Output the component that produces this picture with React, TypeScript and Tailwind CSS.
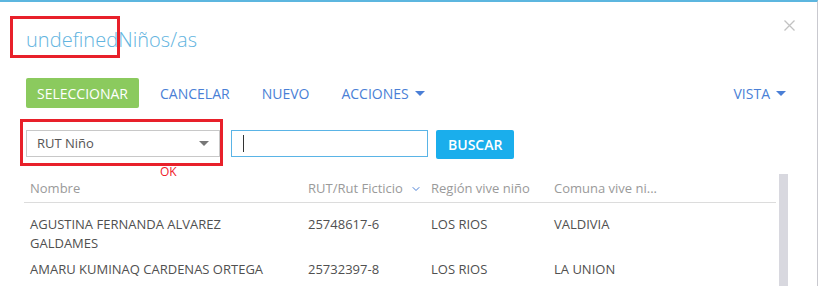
import { ChevronDown } from "lucide-react";

const rows = [
  { nombre: ["AGUSTINA FERNANDA ALVAREZ", "GALDAMES"], rut: "25748617-6", region: "LOS RIOS", comuna: "VALDIVIA" },
  { nombre: ["AMARU KUMINAQ CARDENAS ORTEGA"], rut: "25732397-8", region: "LOS RIOS", comuna: "LA UNION" },
];

function Caret() {
  return <span className="ml-[6px] inline-block h-0 w-0 border-x-[5px] border-t-[5px] border-x-transparent border-t-[#4a7fd6]" />;
}

export default function App() {
  return (
    <div
      className="relative h-[286px] w-[818px] overflow-hidden border-t-[2px] border-r border-t-[#5cb6df] border-r-[#c9c9cf] bg-white"
      style={{ fontFamily: '"Open Sans", "Liberation Sans", sans-serif' }}
    >
      {/* title */}
      <div className="relative pl-[26px] pt-[24px]">
        <h1 className="text-[20px] font-light tracking-[0.05px] leading-[28px] text-[#62b4e0]">undefinedNiños/as</h1>
        <div className="absolute left-[10px] top-[14px] h-[42px] w-[110px] border-[3px] border-[#e8202a]" />
      </div>
      <button className="absolute left-[784px] top-[18px]">
        <svg width="11" height="11" viewBox="0 0 11 11" stroke="#c2c2c2" strokeWidth="1.3">
          <path d="M0.5 0.5L10.5 10.5M10.5 0.5L0.5 10.5" />
        </svg>
      </button>

      {/* toolbar */}
      <div className="mt-[24px] flex h-[30px] items-center pl-[26px] pr-[31px] text-[14px] text-[#4a7fd6]">
        <button className="h-[30px] rounded-[2px] bg-[#8bca5e] px-[11px] text-white">SELECCIONAR</button>
        <span className="ml-[21px]">CANCELAR</span>
        <span className="ml-[32px]">NUEVO</span>
        <span className="ml-[32px] flex items-center">ACCIONES<Caret /></span>
        <span className="ml-auto flex items-center">VISTA<Caret /></span>
      </div>

      {/* search */}
      <div className="mt-[22px] flex items-start pl-[26px]">
        <div className="relative">
          <div className="flex h-[27px] w-[194px] items-center justify-between border border-[#c8c8c8] pl-[10px] pr-[10px] text-[13px] text-[#555]">
            <span>RUT Niño</span>
            <span className="h-0 w-0 border-x-[5px] border-t-[5px] border-x-transparent border-t-[#777]" />
          </div>
          <div className="absolute -left-[6px] -top-[11px] h-[47px] w-[203px] border-[3px] border-[#e8202a]" />
          <div className="absolute left-[134px] top-[35px] text-[12px] leading-[14px] text-[#f0202a]">OK</div>
        </div>
        <div className="ml-[11px] flex h-[27px] w-[197px] items-center border border-[#5ab4e6] pl-[11px]">
          <span className="h-[17px] w-px bg-[#333]" />
        </div>
        <button className="ml-[8px] h-[29px] rounded-[2px] bg-[#1aaeec] px-[12px] text-[14px] font-semibold text-white">BUSCAR</button>
      </div>

      {/* table */}
      <div className="mt-[15px] flex pl-[24px]">
        <div className="w-[752px] text-[13px]">
          <div className="flex h-[29px] items-center border-b border-[#dcdcdc] pt-[1px] text-[#9a9a9a]">
            <div className="w-[278px] pl-[6px]">Nombre</div>
            <div className="flex w-[123px] items-center pl-[6px]">
              RUT/Rut Ficticio
              <ChevronDown className="ml-[7px] h-[12px] w-[12px] text-[#4a7fd6]" strokeWidth={2} />
            </div>
            <div className="w-[123px] pl-[6px]">Región vive niño</div>
            <div className="pl-[6px]">Comuna vive ni...</div>
          </div>
          <div className="pt-[12px] text-[#505050]">
            {rows.map((r) => (
              <div key={r.rut} className="flex pb-[7px] leading-[19px]">
                <div className="w-[278px] pl-[6px]">
                  {r.nombre.map((n) => (
                    <div key={n}>{n}</div>
                  ))}
                </div>
                <div className="w-[123px] pl-[6px]">{r.rut}</div>
                <div className="w-[123px] pl-[6px]">{r.region}</div>
                <div className="pl-[6px]">{r.comuna}</div>
              </div>
            ))}
          </div>
        </div>
        <div className="ml-[3px] h-[140px] w-[9px] bg-[#d8d8df]" />
      </div>
    </div>
  );
}
